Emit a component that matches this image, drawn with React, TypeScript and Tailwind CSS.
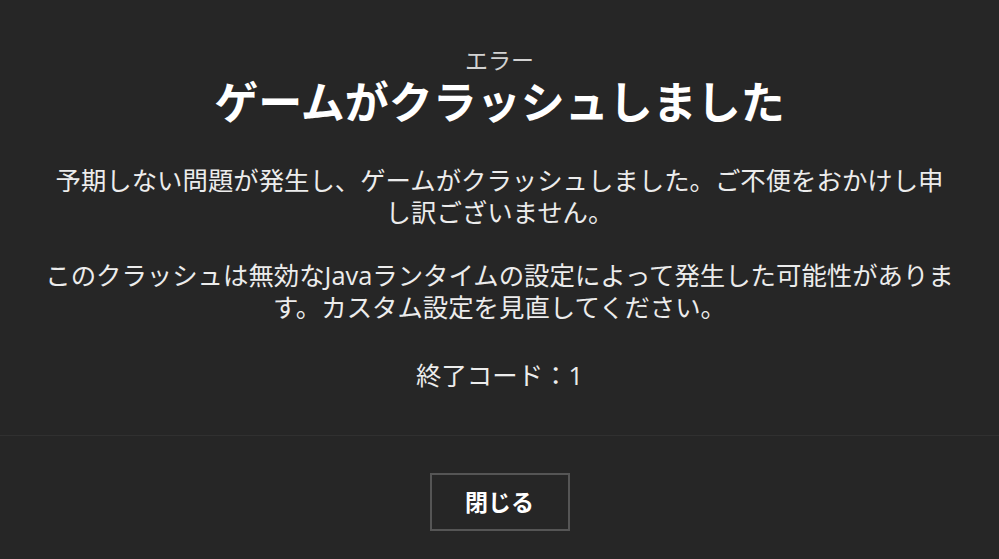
export default function App() {
  return (
    <div
      className="w-full h-[559px] bg-[#262626] text-white flex flex-col items-center overflow-hidden"
      style={{ fontFamily: '"Open Sans", "Noto Sans CJK JP", sans-serif' }}
    >
      <div className="w-full flex flex-col items-center px-[30px] pt-[47px] text-center">
        <div className="text-[23px] leading-[26px] text-[#d2d2d2]">エラー</div>
        <h1 className="mt-[4px] text-[44px] leading-[50px] font-bold">ゲームがクラッシュしました</h1>

        <p className="mt-[37px] text-[25.4px] leading-[32px] text-[#ececec]">
          予期しない問題が発生し、ゲームがクラッシュしました。ご不便をおかけし申
          <br />
          し訳ございません。
        </p>

        <p className="mt-[31px] text-[25.4px] leading-[32px] text-[#ececec]">
          このクラッシュは無効なJavaランタイムの設定によって発生した可能性がありま
          <br />
          す。カスタム設定を見直してください。
        </p>

        <p className="mt-[36px] text-[25.4px] leading-[32px] text-[#ececec]">終了コード：1</p>
      </div>

      <div className="w-full h-px bg-[#303030] mt-[44px]" />

      <div className="flex justify-center pt-[37px]">
        <button className="w-[140px] h-[58px] border-2 border-[#555555] text-[23px] font-bold text-white">
          閉じる
        </button>
      </div>
    </div>
  );
}
